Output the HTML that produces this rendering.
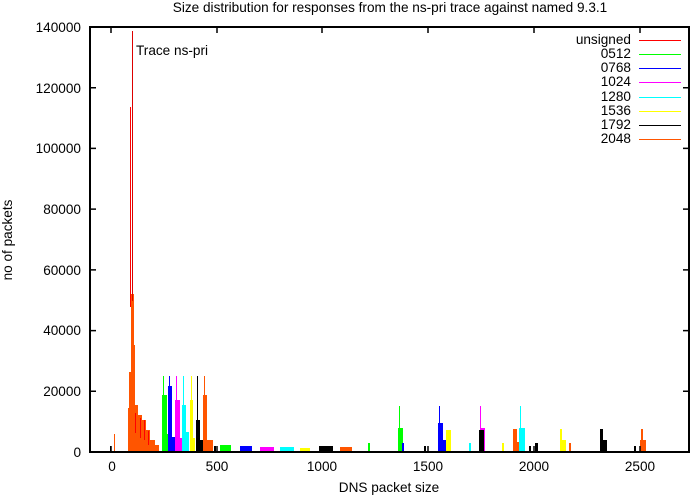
<!DOCTYPE html>
<html><head><meta charset="utf-8"><style>
html,body{margin:0;padding:0;background:#fff;}
svg{display:block;font-family:"Liberation Sans",sans-serif;font-size:13.6px;}
</style></head><body>
<svg width="698" height="496" viewBox="0 0 698 496" xmlns="http://www.w3.org/2000/svg">
<rect width="698" height="496" fill="#fff"/>
<text x="390" y="12" text-anchor="middle">Size distribution for responses from the ns-pri trace against named 9.3.1</text>
<text x="389" y="492" text-anchor="middle">DNS packet size</text>
<text transform="translate(12,240) rotate(-90)" text-anchor="middle">no of packets</text>
<g text-anchor="end">
<text x="81" y="457">0</text>
<text x="81" y="396">20000</text>
<text x="81" y="335">40000</text>
<text x="81" y="275">60000</text>
<text x="81" y="214">80000</text>
<text x="81" y="153">100000</text>
<text x="81" y="93">120000</text>
<text x="81" y="32">140000</text>
</g>
<g text-anchor="middle">
<text x="112" y="471">0</text>
<text x="217" y="471">500</text>
<text x="322" y="471">1000</text>
<text x="428" y="471">1500</text>
<text x="534" y="471">2000</text>
<text x="640" y="471">2500</text>
</g>
<text x="136" y="55">Trace ns-pri</text>
<g text-anchor="end">
<text x="631" y="44">unsigned</text>
<text x="631" y="58">0512</text>
<text x="631" y="72">0768</text>
<text x="631" y="86">1024</text>
<text x="631" y="101">1280</text>
<text x="631" y="115">1536</text>
<text x="631" y="129">1792</text>
<text x="631" y="143">2048</text>
</g>
<g stroke-width="1">
<line x1="639" y1="40.5" x2="681" y2="40.5" stroke="#f00"/>
<line x1="639" y1="54.5" x2="681" y2="54.5" stroke="#0f0"/>
<line x1="639" y1="68.5" x2="681" y2="68.5" stroke="#00f"/>
<line x1="639" y1="82.5" x2="681" y2="82.5" stroke="#f0f"/>
<line x1="639" y1="97.5" x2="681" y2="97.5" stroke="#0ff"/>
<line x1="639" y1="111.5" x2="681" y2="111.5" stroke="#ff0"/>
<line x1="639" y1="125.5" x2="681" y2="125.5" stroke="#000"/>
<line x1="639" y1="139.5" x2="681" y2="139.5" stroke="#f50"/>
</g>
<g>
<rect x="110" y="446" width="1" height="6" fill="#000"/>
<rect x="114" y="434" width="1" height="18" fill="#f50"/>
<rect x="128" y="408" width="2" height="44" fill="#f50"/>
<rect x="129" y="372" width="2" height="80" fill="#f50"/>
<rect x="131" y="294" width="3" height="158" fill="#f50"/>
<rect x="134" y="345" width="1" height="107" fill="#f50"/>
<rect x="135" y="405" width="3" height="47" fill="#f50"/>
<rect x="138" y="415" width="4" height="37" fill="#f50"/>
<rect x="142" y="420" width="4" height="32" fill="#f50"/>
<rect x="146" y="430" width="4" height="22" fill="#f50"/>
<rect x="150" y="440" width="5" height="12" fill="#f50"/>
<rect x="155" y="445" width="4" height="7" fill="#f50"/>
<rect x="135" y="413" width="1" height="20" fill="#f00"/>
<rect x="140" y="418" width="1" height="20" fill="#f00"/>
<rect x="144" y="420" width="1" height="20" fill="#f00"/>
<rect x="148" y="431" width="1" height="14" fill="#f00"/>
<rect x="130" y="107" width="1" height="200" fill="#f00"/>
<rect x="132" y="31" width="1" height="270" fill="#d00"/>
<rect x="163" y="376" width="1" height="76" fill="#0f0"/>
<rect x="162" y="395" width="5" height="57" fill="#0f0"/>
<rect x="165" y="434" width="3" height="18" fill="#0f0"/>
<rect x="169" y="376" width="1" height="76" fill="#00f"/>
<rect x="168" y="386" width="4" height="66" fill="#00f"/>
<rect x="172" y="437" width="3" height="15" fill="#00f"/>
<rect x="176" y="376" width="1" height="76" fill="#f0f"/>
<rect x="175" y="400" width="5" height="52" fill="#f0f"/>
<rect x="179" y="438" width="3" height="14" fill="#f0f"/>
<rect x="183" y="376" width="1" height="76" fill="#0ff"/>
<rect x="182" y="405" width="4" height="47" fill="#0ff"/>
<rect x="186" y="432" width="3" height="20" fill="#0ff"/>
<rect x="191" y="376" width="1" height="76" fill="#ff0"/>
<rect x="190" y="400" width="3" height="52" fill="#ff0"/>
<rect x="193" y="438" width="2" height="14" fill="#ff0"/>
<rect x="197" y="376" width="1" height="76" fill="#000"/>
<rect x="196" y="420" width="4" height="32" fill="#000"/>
<rect x="200" y="440" width="3" height="12" fill="#000"/>
<rect x="204" y="376" width="1" height="76" fill="#f50"/>
<rect x="203" y="395" width="4" height="57" fill="#f50"/>
<rect x="207" y="440" width="6" height="12" fill="#f50"/>
<rect x="214" y="446" width="2" height="6" fill="#000"/>
<rect x="220" y="445" width="11" height="7" fill="#0f0"/>
<rect x="240" y="446" width="12" height="6" fill="#00f"/>
<rect x="260" y="447" width="14" height="5" fill="#f0f"/>
<rect x="280" y="447" width="14" height="5" fill="#0ff"/>
<rect x="300" y="448" width="10" height="4" fill="#ff0"/>
<rect x="319" y="446" width="14" height="6" fill="#000"/>
<rect x="340" y="447" width="12" height="5" fill="#f50"/>
<rect x="368" y="443" width="2" height="9" fill="#0f0"/>
<rect x="399" y="406" width="1" height="46" fill="#0f0"/>
<rect x="398" y="428" width="5" height="24" fill="#0f0"/>
<rect x="402" y="443" width="2" height="9" fill="#00f"/>
<rect x="424" y="446" width="2" height="6" fill="#000"/>
<rect x="439" y="406" width="1" height="46" fill="#00f"/>
<rect x="438" y="423" width="5" height="29" fill="#00f"/>
<rect x="443" y="440" width="3" height="12" fill="#00f"/>
<rect x="446" y="430" width="5" height="22" fill="#ff0"/>
<rect x="469" y="443" width="2" height="9" fill="#0ff"/>
<rect x="480" y="406" width="1" height="46" fill="#f0f"/>
<rect x="481" y="428" width="4" height="24" fill="#f0f"/>
<rect x="479" y="430" width="5" height="22" fill="#000"/>
<rect x="502" y="443" width="2" height="9" fill="#ff0"/>
<rect x="513" y="429" width="4" height="23" fill="#f50"/>
<rect x="516" y="442" width="3" height="10" fill="#f50"/>
<rect x="520" y="406" width="1" height="46" fill="#0ff"/>
<rect x="519" y="428" width="6" height="24" fill="#0ff"/>
<rect x="529" y="446" width="2" height="6" fill="#000"/>
<rect x="535" y="443" width="3" height="9" fill="#000"/>
<rect x="560" y="429" width="2" height="23" fill="#ff0"/>
<rect x="562" y="440" width="4" height="12" fill="#ff0"/>
<rect x="569" y="443" width="2" height="9" fill="#f50"/>
<rect x="600" y="429" width="3" height="23" fill="#000"/>
<rect x="603" y="440" width="4" height="12" fill="#000"/>
<rect x="634" y="446" width="2" height="6" fill="#000"/>
<rect x="641" y="429" width="2" height="23" fill="#f50"/>
<rect x="640" y="440" width="6" height="12" fill="#f50"/>
</g>
<rect x="90" y="27" width="599" height="425" fill="none" stroke="#000" stroke-width="2"/>
<g stroke="#000" stroke-width="1.5">
<path d="M90 391.3h6M90 330.6h6M90 269.9h6M90 209.1h6M90 148.4h6M90 87.7h6M689 391.3h-6M689 330.6h-6M689 269.9h-6M689 209.1h-6M689 148.4h-6M689 87.7h-6"/>
<path d="M111 452v-6M217 452v-6M322 452v-6M428 452v-6M534 452v-6M640 452v-6M111 27v6M217 27v6M322 27v6M428 27v6M534 27v6M640 27v6"/>
</g>
</svg>
</body></html>
